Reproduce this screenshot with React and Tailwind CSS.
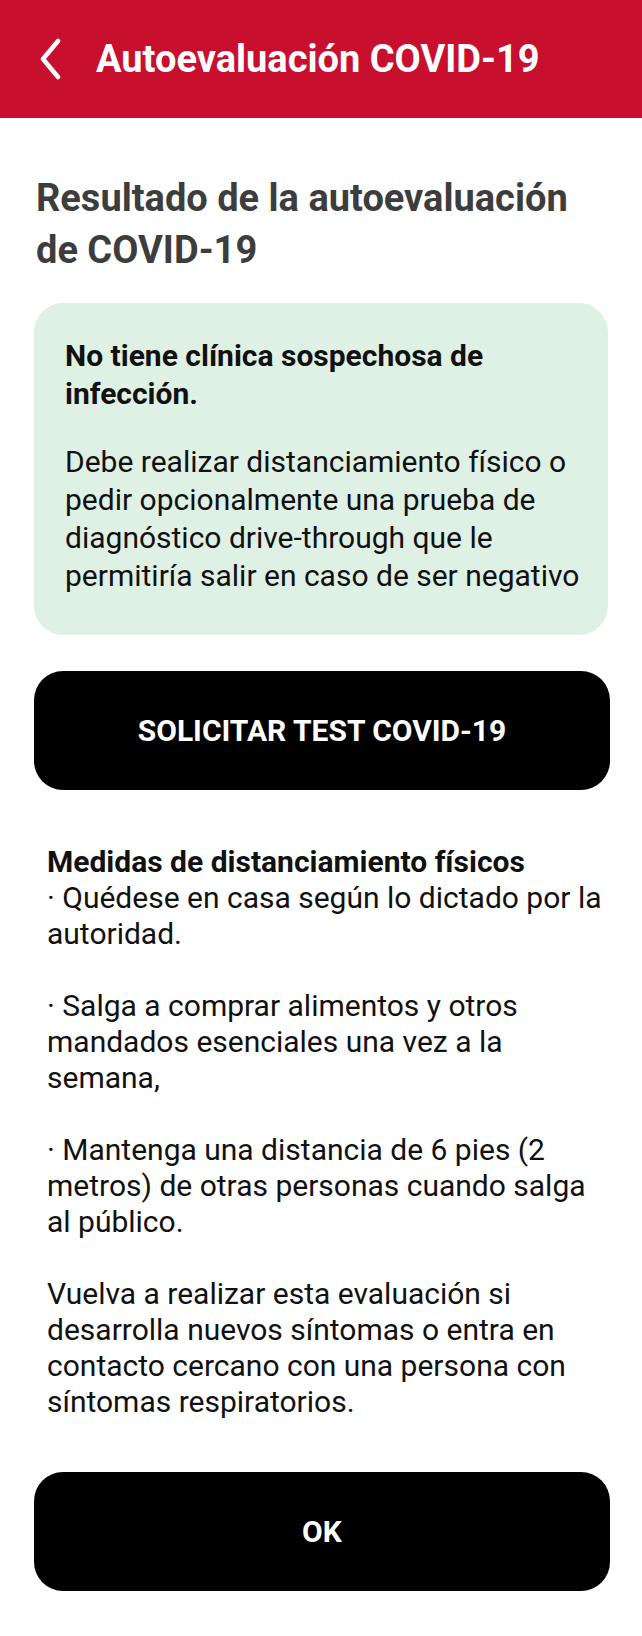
const BackIcon = () => (
  <svg width="22" height="42" viewBox="0 0 22 42" fill="none">
    <path d="M19 3 L4 21 L19 39" stroke="white" strokeWidth="4.5" strokeLinecap="round" strokeLinejoin="round" />
  </svg>
);

const Header = () => (
  <div className="h-[118px] bg-[#c8102e] flex items-center pl-[39px]">
    <BackIcon />
    <h1 className="ml-[35px] text-[38px] font-bold text-white leading-none">Autoevaluación COVID-19</h1>
  </div>
);

const ResultCard = () => (
  <div className="mx-[34px] mt-[27px] rounded-[29px] bg-[#dff0e4] pl-[31px] pr-[16px] pt-[34px] pb-[40px] text-[#111111]">
    <p className="text-[30px] font-bold leading-[38px]">
      No tiene clínica sospechosa de<br />infección.
    </p>
    <p className="mt-[30px] text-[30px] leading-[38px]">
      Debe realizar distanciamiento físico o<br />
      pedir opcionalmente una prueba de<br />
      diagnóstico drive-through que le<br />
      permitiría salir en caso de ser negativo
    </p>
  </div>
);

const BigButton = ({ children, className }) => (
  <button className={`mx-[34px] h-[119px] w-[576px] rounded-[29px] bg-black text-white text-[30px] font-bold flex items-center justify-center ${className}`}>
    {children}
  </button>
);

export default function App() {
  return (
    <div className="w-[642px] min-h-[1636px] bg-white font-['Roboto',sans-serif]">
      <Header />
      <h2 className="mt-[54px] px-[36px] text-[38px] font-bold leading-[52px] text-[#3d3d3d]">
        Resultado de la autoevaluación<br />de COVID-19
      </h2>
      <ResultCard />
      <BigButton className="mt-[36px]">SOLICITAR TEST COVID-19</BigButton>
      <div className="mt-[54px] pl-[47px] pr-[16px] text-[30px] leading-[36px] text-[#111111]">
        <p className="font-bold">Medidas de distanciamiento físicos</p>
        <p>· Quédese en casa según lo dictado por la<br />autoridad.</p>
        <p className="mt-[36px]">· Salga a comprar alimentos y otros<br />mandados esenciales una vez a la<br />semana,</p>
        <p className="mt-[36px]">· Mantenga una distancia de 6 pies (2<br />metros) de otras personas cuando salga<br />al público.</p>
        <p className="mt-[36px]">
          Vuelva a realizar esta evaluación si<br />
          desarrolla nuevos síntomas o entra en<br />
          contacto cercano con una persona con<br />
          síntomas respiratorios.
        </p>
      </div>
      <BigButton className="mt-[52px]">OK</BigButton>
    </div>
  );
}
